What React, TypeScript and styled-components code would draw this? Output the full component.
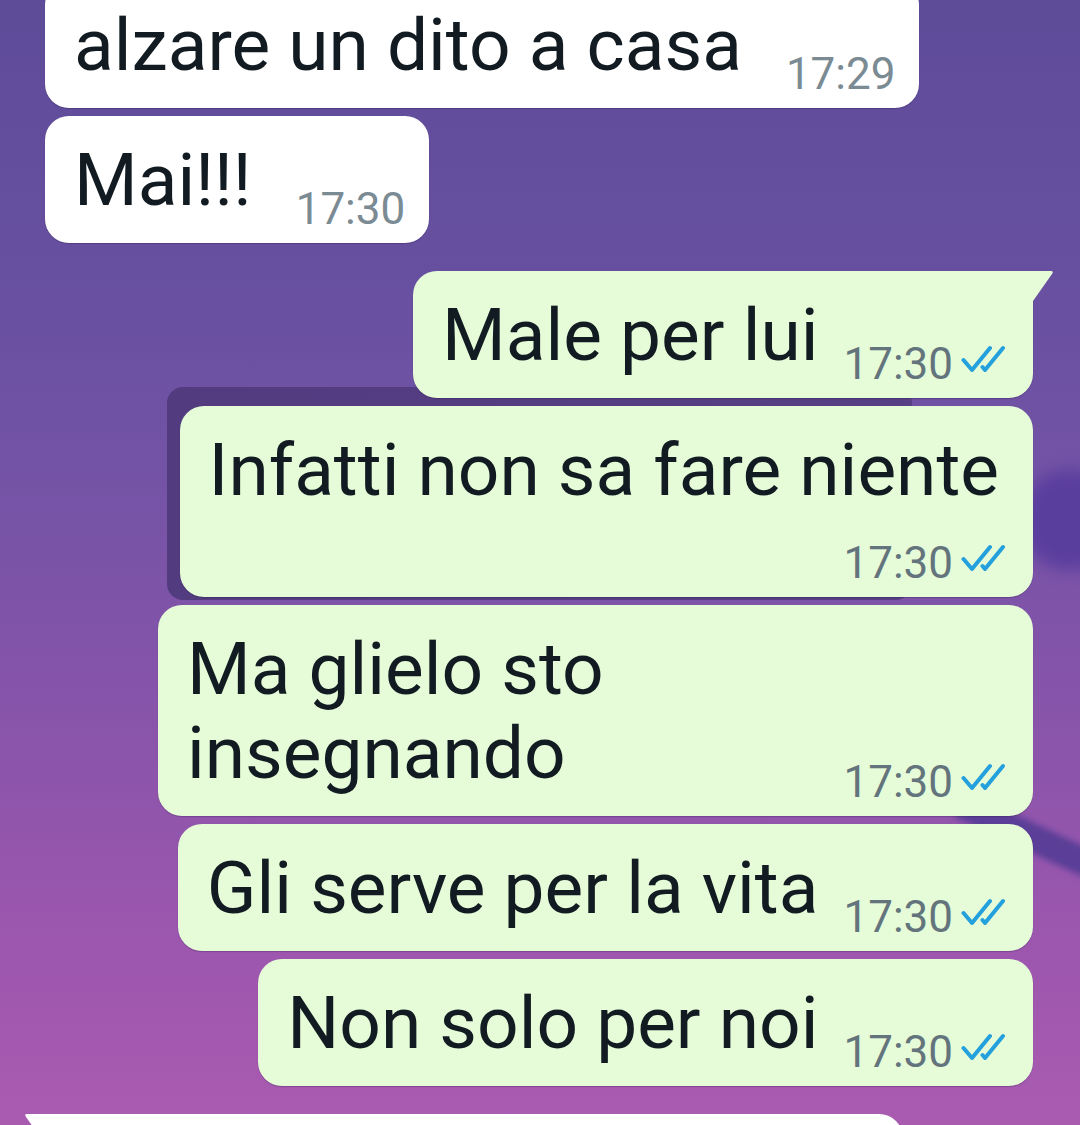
import React from "react";
import styled, { createGlobalStyle, css } from "styled-components";

const GlobalStyle = createGlobalStyle`
  html, body {
    margin: 0;
    padding: 0;
  }
  body {
    font-family: Roboto, "Noto Sans", "Liberation Sans", sans-serif;
  }
`;

const Screen = styled.div`
  position: relative;
  width: 1080px;
  height: 1125px;
  overflow: hidden;
  background: linear-gradient(
    180deg,
    #5e4c99 0%,
    #664f9f 22%,
    #7353a5 42%,
    #8654aa 62%,
    #9b56ae 82%,
    #a95bb0 100%
  );
`;

// wallpaper shapes sitting under the messages
const ShadowPanel = styled.div`
  position: absolute;
  left: 167px;
  top: 387px;
  width: 745px;
  height: 213px;
  border-radius: 16px;
  background: linear-gradient(90deg, #523b7f 0%, #563f84 100%);
`;

const Streak = styled.div`
  position: absolute;
  left: 960px;
  top: 790px;
  width: 200px;
  height: 28px;
  background: #5a3e97;
  transform: rotate(25deg);
  transform-origin: left center;
  filter: blur(3px);
`;

const Blob = styled.div`
  position: absolute;
  right: -40px;
  top: 470px;
  width: 100px;
  height: 100px;
  border-radius: 50%;
  background: #5a3e9e;
  filter: blur(8px);
`;

const Thread = styled.div`
  position: relative;
  z-index: 1;
  display: flex;
  flex-direction: column;
  gap: 8px;
  padding: 0 47px 0 45px;
  margin-top: -19px;
`;

const outTail = css`
  border-top-right-radius: 0;
  &::after {
    content: "";
    position: absolute;
    top: 0;
    right: -22px;
    width: 24px;
    height: 30px;
    background: inherit;
    clip-path: path("M0 0 H20 Q23 0 21 3 L2 30 H0 Z");
  }
`;

const inTail = css`
  border-top-left-radius: 0;
  &::after {
    content: "";
    position: absolute;
    top: 0;
    left: -22px;
    width: 24px;
    height: 30px;
    background: inherit;
    clip-path: path("M24 0 H4 Q1 0 3 3 L22 30 H24 Z");
  }
`;

const Bubble = styled.div<{ $out?: boolean; $tail?: boolean; $stacked?: boolean }>`
  position: relative;
  box-sizing: border-box;
  align-self: ${(p) => (p.$out ? "flex-end" : "flex-start")};
  max-width: 875px;
  display: flex;
  flex-direction: ${(p) => (p.$stacked ? "column" : "row")};
  align-items: ${(p) => (p.$stacked ? "stretch" : "flex-end")};
  gap: ${(p) => (p.$stacked ? 26 : p.$out ? 19 : 44)}px;
  padding: 22px ${(p) => (p.$out ? 28 : 24)}px 21px 29px;
  margin-top: ${(p) => (p.$tail ? 20 : 0)}px;
  background: ${(p) => (p.$out ? "#e6fcd8" : "#ffffff")};
  border-radius: 24px;
  box-shadow: 0 1px 1px rgba(40, 20, 70, 0.28);
  ${(p) => p.$tail && (p.$out ? outTail : inTail)}
`;

const Text = styled.div<{ $out?: boolean }>`
  font-size: 73px;
  line-height: 84px;
  color: #111b21;
  padding-right: ${(p) => (p.$out ? 6 : 0)}px;
`;

const Meta = styled.div`
  display: flex;
  align-items: center;
  justify-content: flex-end;
  flex-shrink: 0;
  margin-bottom: -12px;
`;

const Time = styled.span<{ $out?: boolean }>`
  font-size: 44px;
  line-height: 50px;
  white-space: nowrap;
  color: ${(p) => (p.$out ? "#63747d" : "#7b8b94")};
`;

const TickIcon = styled.svg`
  margin-left: 8px;
  margin-bottom: 10px;
  flex-shrink: 0;
`;

const Placeholder = styled.div`
  width: 805px;
  height: 84px;
`;

const Ticks = () => (
  <TickIcon
    width="44"
    height="28"
    viewBox="0 0 44 28"
    fill="none"
    stroke="#24a0dc"
    strokeWidth="4"
    strokeLinecap="round"
    strokeLinejoin="round"
  >
    <path d="M2.5 15 L11 25 L29 3" />
    <path d="M21.5 22 L24 25 L42 3" />
  </TickIcon>
);

type Msg = {
  text: string;
  time: string;
  out?: boolean;
  tail?: boolean;
  stacked?: boolean;
};

const messages: Msg[] = [
  { text: "alzare un dito a casa", time: "17:29" },
  { text: "Mai!!!", time: "17:30" },
  { text: "Male per lui", time: "17:30", out: true, tail: true },
  { text: "Infatti non sa fare niente", time: "17:30", out: true, stacked: true },
  { text: "Ma glielo sto insegnando", time: "17:30", out: true },
  { text: "Gli serve per la vita", time: "17:30", out: true },
  { text: "Non solo per noi", time: "17:30", out: true },
];

export default function App() {
  return (
    <>
      <GlobalStyle />
      <Screen>
        <ShadowPanel />
        <Streak />
        <Blob />
        <Thread>
          {messages.map((m, i) => (
            <Bubble key={i} $out={m.out} $tail={m.tail} $stacked={m.stacked}>
              <Text $out={m.out}>{m.text}</Text>
              <Meta>
                <Time $out={m.out}>{m.time}</Time>
                {m.out && <Ticks />}
              </Meta>
            </Bubble>
          ))}
          <Bubble $tail>
            <Placeholder />
          </Bubble>
        </Thread>
      </Screen>
    </>
  );
}
